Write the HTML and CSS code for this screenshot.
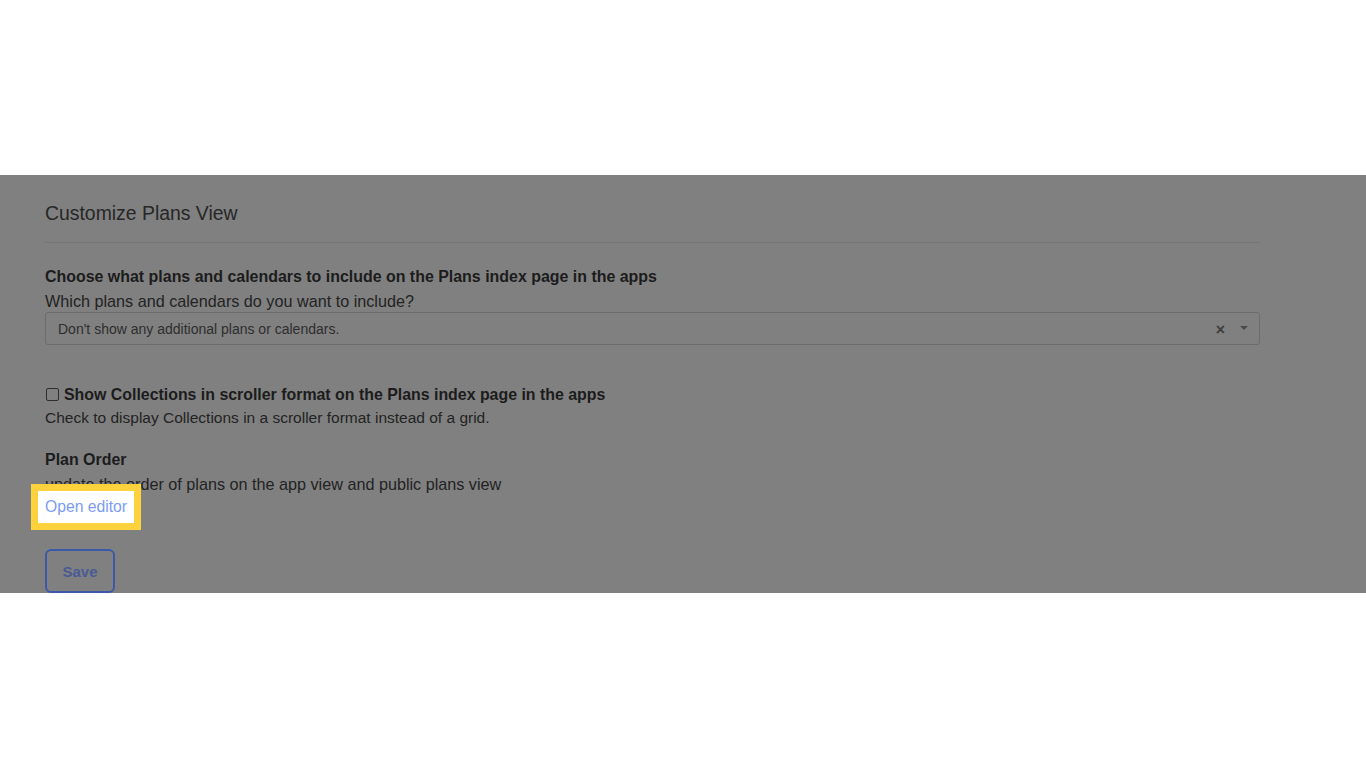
FILE: index.html
```html
<!DOCTYPE html>
<html>
<head>
<meta charset="utf-8">
<link rel="stylesheet" href="styles.css">
</head>
<body>
<div class="top-space"></div>
<div class="frame">
  <div class="panel">
    <h2 class="title">Customize Plans View</h2>
    <div class="divider"></div>
    <div class="group">
      <div class="label">Choose what plans and calendars to include on the Plans index page in the apps</div>
      <div class="help help-wide">Which plans and calendars do you want to include?</div>
      <div class="select">
        <span class="select-text">Don't show any additional plans or calendars.</span>
        <span class="select-clear">×</span>
        <span class="select-arrow"></span>
      </div>
    </div>
    <div class="group check-group">
      <label class="check-label"><span class="checkbox"></span>Show Collections in scroller format on the Plans index page in the apps</label>
      <div class="help help-narrow">Check to display Collections in a scroller format instead of a grid.</div>
    </div>
    <div class="group order-group">
      <div class="label">Plan Order</div>
      <div class="help help-wide">update the order of plans on the app view and public plans view</div>
      <div class="link-row">
        <span class="spotlight"><a class="link">Open editor</a></span>
      </div>
    </div>
    <button class="save">Save</button>
  </div>
</div>
</body>
</html>
```

FILE: styles.css
```css
html, body {
  margin: 0;
  padding: 0;
  background: #ffffff;
  font-family: "Liberation Sans", Arial, sans-serif;
}
.top-space {
  height: 175px;
}
.frame {
  height: 418px;
  overflow: hidden;
  background: #808080;
}
.panel {
  width: 1215px;
  padding: 0 0 0 45px;
  color: #1f1f1f;
}
.title {
  margin: 0;
  padding-top: 27px;
  font-size: 19.4px;
  font-weight: normal;
  line-height: 22px;
  color: #272727;
}
.divider {
  margin-top: 18px;
  height: 1px;
  background: #767676;
}
.group {
  margin-top: 22px;
}
.label {
  font-size: 15.95px;
  font-weight: bold;
  line-height: 24px;
  color: #1c1c1c;
}
.help {
  font-size: 16px;
  line-height: 24px;
  color: #232323;
}
.help-wide {
  font-size: 16.2px;
}
.help-narrow {
  font-size: 15.5px;
}
.select {
  margin-top: -1px;
  height: 31px;
  border: 1px solid #6c6c6c;
  border-radius: 3px;
  display: flex;
  align-items: center;
  padding: 0 12px 0 12px;
  box-sizing: content-box;
}
.select-text {
  flex: 1;
  font-size: 14px;
  color: #2e2e2e;
}
.select-clear {
  font-size: 16px;
  font-weight: bold;
  color: #3d3d3d;
  margin-right: 15px;
  position: relative;
  top: 1px;
}
.select-arrow {
  width: 0;
  height: 0;
  border-left: 4px solid transparent;
  border-right: 4px solid transparent;
  border-top: 4px solid #4a4a4a;
  margin-bottom: 1px;
  margin-right: -1px;
}
.check-group {
  margin-top: 39px;
}
.check-label {
  display: flex;
  align-items: center;
  font-size: 15.9px;
  font-weight: bold;
  line-height: 22px;
  color: #1c1c1c;
}
.checkbox {
  width: 11px;
  height: 11px;
  border: 1px solid #2e2e2e;
  border-radius: 2px;
  margin: 0 5px 0 1px;
  position: relative;
  top: -1px;
}
.order-group {
  margin-top: 18px;
}
.link-row {
  height: 22px;
  position: relative;
}
.spotlight {
  position: absolute;
  left: -14px;
  top: -12px;
  padding: 7px;
  background: #ffffff;
  border: 7px solid #fed23c;
  line-height: 18px;
  width: 82px;
}
.link {
  font-size: 15.7px;
  color: #7b9cf2;
  text-decoration: none;
  line-height: 18px;
  white-space: nowrap;
}
.save {
  display: block;
  margin-top: 31px;
  width: 70px;
  height: 44px;
  background: transparent;
  border: 2px solid #3d58a6;
  border-radius: 6px;
  font-family: "Liberation Sans", Arial, sans-serif;
  font-size: 15px;
  font-weight: bold;
  color: #4a5a94;
  padding: 0;
}
```
